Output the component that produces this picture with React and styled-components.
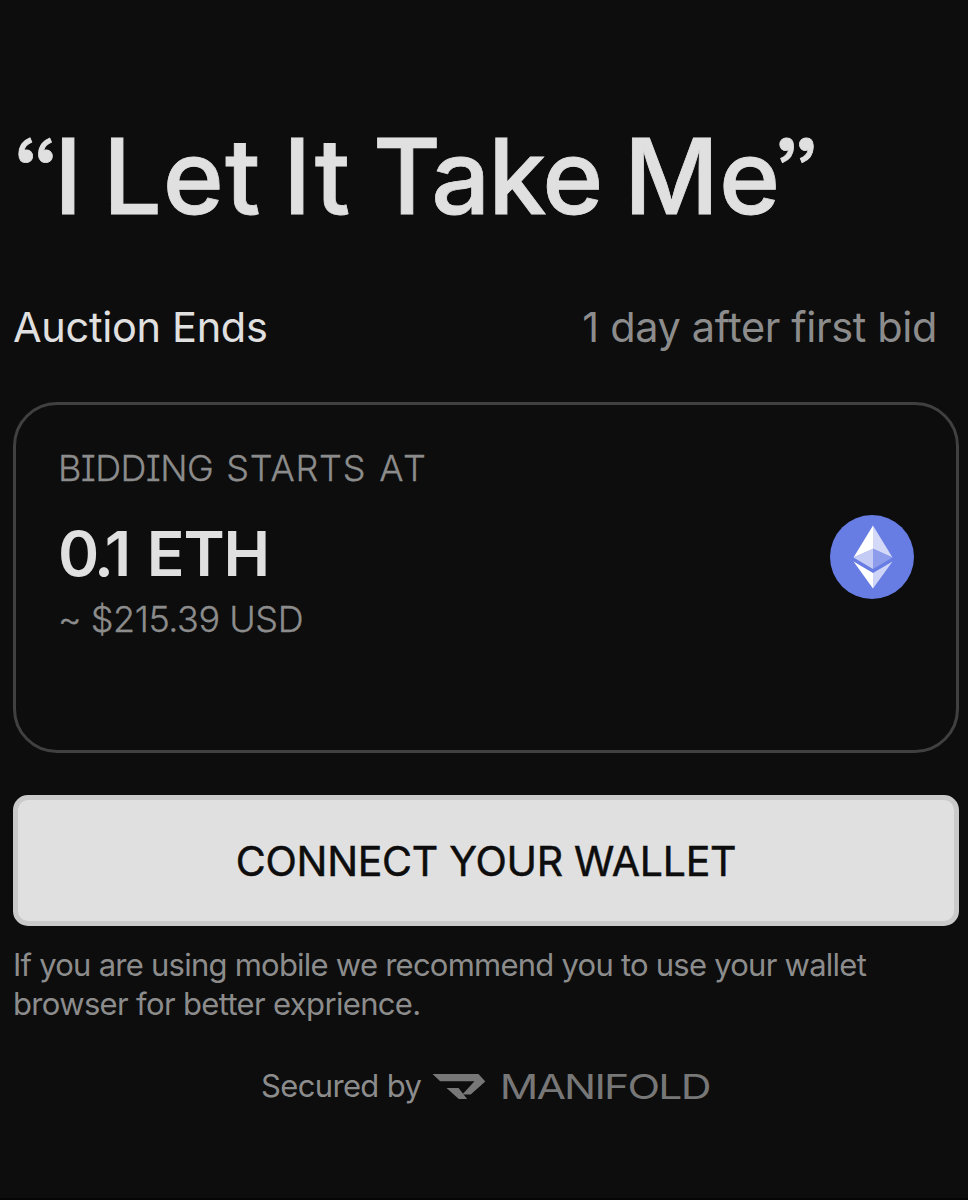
import React from "react";
import styled, { createGlobalStyle } from "styled-components";

const GlobalStyle = createGlobalStyle`
  *, *::before, *::after { box-sizing: border-box; }
  body {
    margin: 0;
    background: #0d0d0d;
    color: #e0e0e0;
    font-family: Inter, "Liberation Sans", sans-serif;
    font-kerning: normal;
    -webkit-font-smoothing: antialiased;
  }
`;

const Page = styled.main`
  width: 968px;
  height: 1200px;
  padding: 116px 9px 0 13px;
  display: flex;
  flex-direction: column;
  background: #0d0d0d;
  border-bottom: 2px solid #060606;
  overflow: hidden;
  white-space: nowrap;
`;

const Title = styled.h1`
  display: flex;
  height: 120px;
  margin: 0 0 66px;
  font-size: 104px;
  line-height: 120px;
  font-weight: 500;
  -webkit-text-stroke: 0.8px;
`;

const TitleWord = styled.span`
  flex: none;
  width: ${(p) => p.$width}px;
  letter-spacing: ${(p) => p.$spacing || 0}px;
`;

const TitleQuote = styled.span`
  flex: none;
  width: 41px;
  font-size: 82px;
  line-height: 108px;
  font-weight: 600;
  font-feature-settings: "ss03" 1;
  letter-spacing: -8px;
`;

const EndsRow = styled.div`
  display: flex;
  justify-content: space-between;
  padding: 0 22px 0 0;
  margin-bottom: 50px;
  font-size: 41.5px;
  line-height: 50px;
`;

const EndsLabel = styled.span`
  letter-spacing: -0.32px;
`;

const EndsValue = styled.span`
  color: #8c8c8c;
  letter-spacing: -0.38px;
`;

const BidCard = styled.section`
  height: 351px;
  padding: 0 42px;
  border: 3px solid #404040;
  border-radius: 44px;
  display: flex;
  justify-content: space-between;
`;

const BidInfo = styled.div`
  padding-top: 42px;
  display: flex;
  flex-direction: column;
`;

const BidLabel = styled.span`
  display: flex;
  gap: 13px;
  font-size: 36px;
  line-height: 42px;
  font-weight: 300;
  font-feature-settings: "cv08" 1;
  -webkit-text-stroke: 0.3px;
  color: #8c8c8c;
`;

const Tracked = styled.span`
  letter-spacing: ${(p) => p.$spacing};
`;

const BidPrice = styled.span`
  display: flex;
  gap: 19px;
  margin-top: 24px;
  font-size: 62.5px;
  line-height: 80px;
  font-weight: 600;
`;

const BidFiat = styled.span`
  margin-top: 5px;
  font-size: 36px;
  line-height: 42px;
  font-weight: 300;
  letter-spacing: -0.45px;
  -webkit-text-stroke: 0.3px;
  color: #8c8c8c;
`;

const EthIcon = styled.svg`
  width: 84px;
  height: 84px;
  margin-top: 110px;
  flex: none;
`;

const ConnectButton = styled.button`
  height: 131px;
  margin-top: 42px;
  padding: 0;
  border: 5px solid #cacaca;
  border-radius: 15px;
  background: #e0e0e0;
  color: #0d0d0d;
  font-family: inherit;
  font-size: 41px;
  line-height: 50px;
  letter-spacing: -0.28px;
  -webkit-text-stroke: 0.5px;
`;

const Note = styled.p`
  margin: 19px 0 0;
  font-size: 31px;
  line-height: 39px;
  color: #8c8c8c;
`;

const NoteLine = styled.span`
  display: block;
  letter-spacing: ${(p) => p.$spacing};
`;

const Secured = styled.footer`
  margin-top: 43px;
  padding-left: 248px;
  height: 40px;
  display: flex;
  align-items: center;
  font-size: 31px;
  line-height: 40px;
  letter-spacing: -0.65px;
  color: #8c8c8c;
`;

const SecuredText = styled.span`
  width: 171px;
`;

const Brand = styled.svg`
  width: 280px;
  height: 40px;
  flex: none;
`;

const BrandName = styled.text`
  font-family: Inter, "Liberation Sans", sans-serif;
  font-size: 33.5px;
  font-weight: 400;
  letter-spacing: -1.4px;
`;

function Ethereum() {
  return (
    <EthIcon viewBox="0 0 84 84" aria-label="Ethereum">
      <circle cx="42" cy="42" r="42" fill="#687de3" />
      <path d="M43 10.5 23.5 42.5 43 34Z" fill="#fff" />
      <path d="M43 10.5 62.5 42.5 43 34Z" fill="#d3d9f7" />
      <path d="M43 33.5 23.5 42.5 43 54Z" fill="#c4ccf5" />
      <path d="M43 33.5 62.5 42.5 43 54Z" fill="#8e9deb" />
      <path d="M23.5 46.5 43 58V73.5Z" fill="#fff" />
      <path d="M62.5 46.5 43 58V73.5Z" fill="#cdd4f7" />
    </EthIcon>
  );
}

function Manifold() {
  return (
    <Brand viewBox="432 1066 280 40" fill="#777" aria-label="Manifold">
      <path d="M432.5 1074H478.5L485.3 1081.5 470.7 1094.4H462.3L474.5 1081.2H440.2Z" />
      <path d="M446.5 1088H458.5L467.2 1099H458.8Z" />
      <BrandName x="499.7" y="1098.6" textLength="210" lengthAdjust="spacingAndGlyphs">
        MANIFOLD
      </BrandName>
    </Brand>
  );
}

export default function App() {
  return (
    <>
      <GlobalStyle />
      <Page>
        <Title>
          <TitleQuote>“</TitleQuote>
          <TitleWord $width={49}>I </TitleWord>
          <TitleWord $width={180} $spacing={1}>Let </TitleWord>
          <TitleWord $width={90} $spacing={2}>It </TitleWord>
          <TitleWord $width={251} $spacing={-2}>Take </TitleWord>
          <TitleWord $width={150} $spacing={0}>Me</TitleWord>
          <TitleQuote>”</TitleQuote>
        </Title>
        <EndsRow>
          <EndsLabel>Auction Ends</EndsLabel>
          <EndsValue>1 day after first bid</EndsValue>
        </EndsRow>
        <BidCard>
          <BidInfo>
            <BidLabel>
              <Tracked $spacing="-0.6px">BIDDING</Tracked>
              <Tracked $spacing="0.8px">STARTS</Tracked>
              <Tracked $spacing="2.5px">AT</Tracked>
            </BidLabel>
            <BidPrice>
              <Tracked $spacing="-3.5px">0.1</Tracked>
              <Tracked $spacing="-1.2px">ETH</Tracked>
            </BidPrice>
            <BidFiat>~ $215.39 USD</BidFiat>
          </BidInfo>
          <Ethereum />
        </BidCard>
        <ConnectButton type="button">CONNECT YOUR WALLET</ConnectButton>
        <Note>
          <NoteLine $spacing="-0.76px">If you are using mobile we recommend you to use your wallet</NoteLine>
          <NoteLine $spacing="-0.66px">browser for better exprience.</NoteLine>
        </Note>
        <Secured>
          <SecuredText>Secured by</SecuredText>
          <Manifold />
        </Secured>
      </Page>
    </>
  );
}
